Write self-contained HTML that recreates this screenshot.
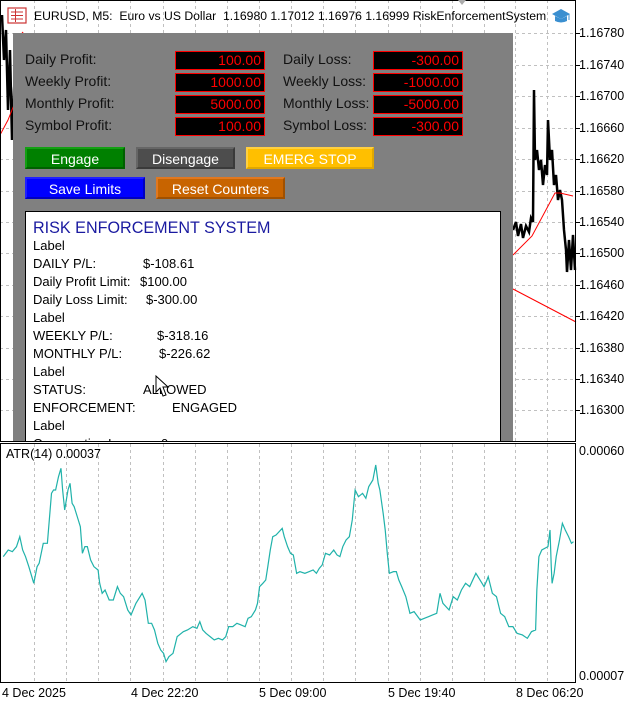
<!DOCTYPE html>
<html><head><meta charset="utf-8"><style>
*{margin:0;padding:0;box-sizing:border-box}
body{width:644px;height:703px;background:#fff;position:relative;overflow:hidden;font-family:"Liberation Sans",sans-serif;color:#000}
.a{position:absolute;white-space:nowrap}
.lbl{font-size:14px;color:#111}
.inp{position:absolute;width:90px;height:19px;background:#000;border:1px solid #f00;color:#f00;font-size:14px;text-align:right;padding-right:3px;line-height:17px}
.btn{position:absolute;height:22px;color:#fff;font-size:14px;text-align:center;line-height:20px;border:2px solid}
.t{font-size:13px;position:absolute;left:33px;white-space:nowrap}
.pl{position:absolute;left:579px;font-size:12.5px}
</style></head><body>
<svg class="a" style="left:0;top:0" width="644" height="703">
<g stroke="#c0c0c0" stroke-dasharray="3,3" stroke-width="1">
<line x1="0" y1="33.5" x2="576" y2="33.5"/><line x1="0" y1="65.5" x2="576" y2="65.5"/><line x1="0" y1="96.5" x2="576" y2="96.5"/><line x1="0" y1="128.5" x2="576" y2="128.5"/><line x1="0" y1="159.5" x2="576" y2="159.5"/><line x1="0" y1="191.5" x2="576" y2="191.5"/><line x1="0" y1="222.5" x2="576" y2="222.5"/><line x1="0" y1="253.5" x2="576" y2="253.5"/><line x1="0" y1="285.5" x2="576" y2="285.5"/><line x1="0" y1="316.5" x2="576" y2="316.5"/><line x1="0" y1="348.5" x2="576" y2="348.5"/><line x1="0" y1="379.5" x2="576" y2="379.5"/><line x1="0" y1="410.5" x2="576" y2="410.5"/>
<line x1="34.5" y1="0" x2="34.5" y2="683"/><line x1="66.5" y1="0" x2="66.5" y2="683"/><line x1="98.5" y1="0" x2="98.5" y2="683"/><line x1="130.5" y1="0" x2="130.5" y2="683"/><line x1="163.5" y1="0" x2="163.5" y2="683"/><line x1="195.5" y1="0" x2="195.5" y2="683"/><line x1="227.5" y1="0" x2="227.5" y2="683"/><line x1="259.5" y1="0" x2="259.5" y2="683"/><line x1="291.5" y1="0" x2="291.5" y2="683"/><line x1="323.5" y1="0" x2="323.5" y2="683"/><line x1="355.5" y1="0" x2="355.5" y2="683"/><line x1="388.5" y1="0" x2="388.5" y2="683"/><line x1="420.5" y1="0" x2="420.5" y2="683"/><line x1="452.5" y1="0" x2="452.5" y2="683"/><line x1="484.5" y1="0" x2="484.5" y2="683"/><line x1="515.5" y1="0" x2="515.5" y2="683"/><line x1="547.5" y1="0" x2="547.5" y2="683"/>
</g>
<polyline fill="none" stroke="#000" stroke-width="2.5" points="2,15 4,60 6,30 8,110 10,50 12,140 14,90 16,60"/>
<polyline fill="none" stroke="#f00" stroke-width="1" points="0,135 8,120 14,105"/>
<polyline fill="none" stroke="#f00" stroke-width="1" points="22,32 30,40"/>
<polyline fill="none" stroke="#000" stroke-width="2.5" points="513,230 516,222 518,236 521,224 523,238 526,226 529,232 531,218 533,222 534,90 535,160 537,150 539,170 541,160 543,185 545,165 547,175 548,120 550,160 552,150 554,185 556,175 558,200 560,190 562,200 564,230 566,250 567,272 569,240 571,270 573,235 575,270"/>
<polyline fill="none" stroke="#f00" stroke-width="1" points="513,255 532,236 555,193 560,193 573,196"/>
<polyline fill="none" stroke="#f00" stroke-width="1" points="513,289 576,322"/>
<rect x="0.5" y="0.5" width="575" height="441" fill="none" stroke="#000"/>
<rect x="0.5" y="443.5" width="575" height="239" fill="none" stroke="#000"/>
<g stroke="#000"><line x1="576" y1="33.5" x2="580" y2="33.5"/><line x1="576" y1="65.5" x2="580" y2="65.5"/><line x1="576" y1="96.5" x2="580" y2="96.5"/><line x1="576" y1="128.5" x2="580" y2="128.5"/><line x1="576" y1="159.5" x2="580" y2="159.5"/><line x1="576" y1="191.5" x2="580" y2="191.5"/><line x1="576" y1="222.5" x2="580" y2="222.5"/><line x1="576" y1="253.5" x2="580" y2="253.5"/><line x1="576" y1="285.5" x2="580" y2="285.5"/><line x1="576" y1="316.5" x2="580" y2="316.5"/><line x1="576" y1="348.5" x2="580" y2="348.5"/><line x1="576" y1="379.5" x2="580" y2="379.5"/><line x1="576" y1="410.5" x2="580" y2="410.5"/></g>
<g transform="translate(0,440) scale(0.412,0.3333)">
<polyline fill="none" stroke="#20b2aa" stroke-width="1.2" vector-effect="non-scaling-stroke" points="8,350 20,330 30,335 40,320 48,290 55,330 62,350 70,380 82,430 90,380 95,370 105,310 115,310 125,160 130,150 135,150 142,110 148,85 152,150 157,210 165,150 170,130 175,190 180,200 190,240 195,260 200,340 206,320 212,320 220,360 228,380 238,390 242,430 248,460 255,450 265,480 275,480 285,440 292,460 300,470 310,510 318,525 330,490 345,460 352,480 360,550 368,550 375,570 383,610 390,630 397,640 403,665 410,650 420,640 428,600 430,590 440,580 445,575 455,570 468,560 478,565 485,545 492,570 500,580 510,590 520,600 530,595 540,600 548,590 555,560 565,560 575,550 585,555 595,560 602,535 610,530 620,510 625,490 630,440 638,430 645,420 650,380 656,330 662,290 670,285 685,265 690,290 698,320 705,340 712,345 720,400 728,395 740,400 750,395 760,390 768,400 775,385 782,375 790,340 800,345 810,330 818,345 825,350 832,320 840,300 848,290 855,240 862,150 870,170 880,160 888,175 895,140 905,120 912,75 918,130 922,150 930,220 935,270 940,340 945,400 955,395 962,395 968,420 975,440 985,470 995,520 1005,515 1020,540 1030,535 1040,530 1050,525 1060,520 1068,460 1075,490 1090,510 1100,470 1110,480 1120,450 1130,430 1140,440 1155,400 1165,420 1175,440 1182,420 1185,410 1195,460 1205,470 1215,520 1225,530 1235,560 1245,560 1255,580 1268,585 1280,595 1290,575 1300,570 1303,450 1308,350 1315,330 1330,320 1335,270 1338,380 1340,430 1345,400 1350,350 1358,300 1365,250 1372,270 1380,290 1387,310 1392,305"/>
</g>
<rect x="8" y="8" width="18" height="15" fill="#fff" stroke="#c33" stroke-width="1.2"/>
<g stroke="#c33"><line x1="11" y1="12" x2="23" y2="12"/><line x1="11" y1="15.5" x2="23" y2="15.5"/><line x1="11" y1="19" x2="23" y2="19"/><line x1="15.5" y1="9" x2="15.5" y2="22"/></g>
<path d="M552,14 L561,9 L570,14 L561,19 Z" fill="#3a8fd0"/><path d="M555,16 L555,21 Q561,24 567,21 L567,16 L561,19 Z" fill="#3a8fd0"/><line x1="569" y1="14" x2="569" y2="20" stroke="#3a8fd0"/>
<path d="M458,0 L466,0 L462,5 Z" fill="#aaa"/>
</svg>
<div class="a" style="left:34px;top:9px;font-size:12.2px">EURUSD, M5:&nbsp; Euro vs US Dollar&nbsp; 1.16980 1.17012 1.16976 1.16999 RiskEnforcementSystem</div>

<div class="pl" style="top:26px">1.16780</div><div class="pl" style="top:58px">1.16740</div><div class="pl" style="top:89px">1.16700</div><div class="pl" style="top:121px">1.16660</div><div class="pl" style="top:152px">1.16620</div><div class="pl" style="top:184px">1.16580</div><div class="pl" style="top:215px">1.16540</div><div class="pl" style="top:246px">1.16500</div><div class="pl" style="top:278px">1.16460</div><div class="pl" style="top:309px">1.16420</div><div class="pl" style="top:341px">1.16380</div><div class="pl" style="top:372px">1.16340</div><div class="pl" style="top:403px">1.16300</div>
<div class="pl" style="top:444px">0.00060</div><div class="pl" style="top:669px">0.00007</div>
<div class="a" style="left:6px;top:447px;font-size:12.5px">ATR(14) 0.00037</div>
<div class="a" style="left:2px;top:686px;font-size:12.5px">4 Dec 2025</div>
<div class="a" style="left:131px;top:686px;font-size:12.5px">4 Dec 22:20</div>
<div class="a" style="left:259px;top:686px;font-size:12.5px">5 Dec 09:00</div>
<div class="a" style="left:388px;top:686px;font-size:12.5px">5 Dec 19:40</div>
<div class="a" style="left:516px;top:686px;font-size:12.5px">8 Dec 06:20</div>

<div class="a" style="left:13px;top:33px;width:500px;height:408px;background:#808080;overflow:hidden">
  <div class="a lbl" style="left:12px;top:18px">Daily Profit:</div>
  <div class="a lbl" style="left:12px;top:40px">Weekly Profit:</div>
  <div class="a lbl" style="left:12px;top:62px">Monthly Profit:</div>
  <div class="a lbl" style="left:12px;top:84px">Symbol Profit:</div>
  <div class="inp" style="left:162px;top:18px">100.00</div>
  <div class="inp" style="left:162px;top:40px">1000.00</div>
  <div class="inp" style="left:162px;top:62px">5000.00</div>
  <div class="inp" style="left:162px;top:84px">100.00</div>
  <div class="a lbl" style="left:270px;top:18px">Daily Loss:</div>
  <div class="a lbl" style="left:270px;top:40px">Weekly Loss:</div>
  <div class="a lbl" style="left:270px;top:62px">Monthly Loss:</div>
  <div class="a lbl" style="left:270px;top:84px">Symbol Loss:</div>
  <div class="inp" style="left:360px;top:18px">-300.00</div>
  <div class="inp" style="left:360px;top:40px">-1000.00</div>
  <div class="inp" style="left:360px;top:62px">-5000.00</div>
  <div class="inp" style="left:360px;top:84px">-300.00</div>
  <div class="btn" style="left:12px;top:114px;width:100px;background:#008000;border-color:#13a013 #006000 #006000 #13a013">Engage</div>
  <div class="btn" style="left:123px;top:114px;width:99px;background:#4d4d4d;border-color:#666 #3a3a3a #3a3a3a #666">Disengage</div>
  <div class="btn" style="left:233px;top:114px;width:128px;background:#ffbf00;border-color:#ffd040 #e0a800 #e0a800 #ffd040">EMERG STOP</div>
  <div class="btn" style="left:12px;top:144px;width:120px;background:#0000ff;border-color:#2020ff #0000c0 #0000c0 #2020ff">Save Limits</div>
  <div class="btn" style="left:143px;top:144px;width:129px;background:#c86400;border-color:#e07820 #a05000 #a05000 #e07820">Reset Counters</div>
  <div class="a" style="left:12px;top:178px;width:476px;height:240px;background:#fff;border:1px solid #000;overflow:hidden">
    <div class="a" style="left:7px;top:6px;font-size:17px;color:#1a1aa0;transform:scaleX(.95);transform-origin:left">RISK ENFORCEMENT SYSTEM</div>
    <div class="t" style="left:7px;top:26px">Label</div>
    <div class="t" style="left:7px;top:44px">DAILY P/L:</div><div class="t" style="left:117px;top:44px">$-108.61</div>
    <div class="t" style="left:7px;top:62px">Daily Profit Limit:</div><div class="t" style="left:114px;top:62px">$100.00</div>
    <div class="t" style="left:7px;top:80px">Daily Loss Limit:</div><div class="t" style="left:120px;top:80px">$-300.00</div>
    <div class="t" style="left:7px;top:98px">Label</div>
    <div class="t" style="left:7px;top:116px">WEEKLY P/L:</div><div class="t" style="left:131px;top:116px">$-318.16</div>
    <div class="t" style="left:7px;top:134px">MONTHLY P/L:</div><div class="t" style="left:133px;top:134px">$-226.62</div>
    <div class="t" style="left:7px;top:152px">Label</div>
    <div class="t" style="left:7px;top:170px">STATUS:</div><div class="t" style="left:117px;top:170px">ALLOWED</div>
    <div class="t" style="left:7px;top:188px">ENFORCEMENT:</div><div class="t" style="left:146px;top:188px">ENGAGED</div>
    <div class="t" style="left:7px;top:206px">Label</div>
    <div class="t" style="left:7px;top:224px">Consecutive Losses:</div><div class="t" style="left:135px;top:224px">0</div>
  </div>
</div>
<svg class="a" style="left:150px;top:372px" width="20" height="28"><path d="M6,4 L6,20 L10,16 L13,24 L16,23 L13,15 L18,15 Z" fill="#fff" stroke="#000" stroke-width="1"/></svg>
</body></html>
